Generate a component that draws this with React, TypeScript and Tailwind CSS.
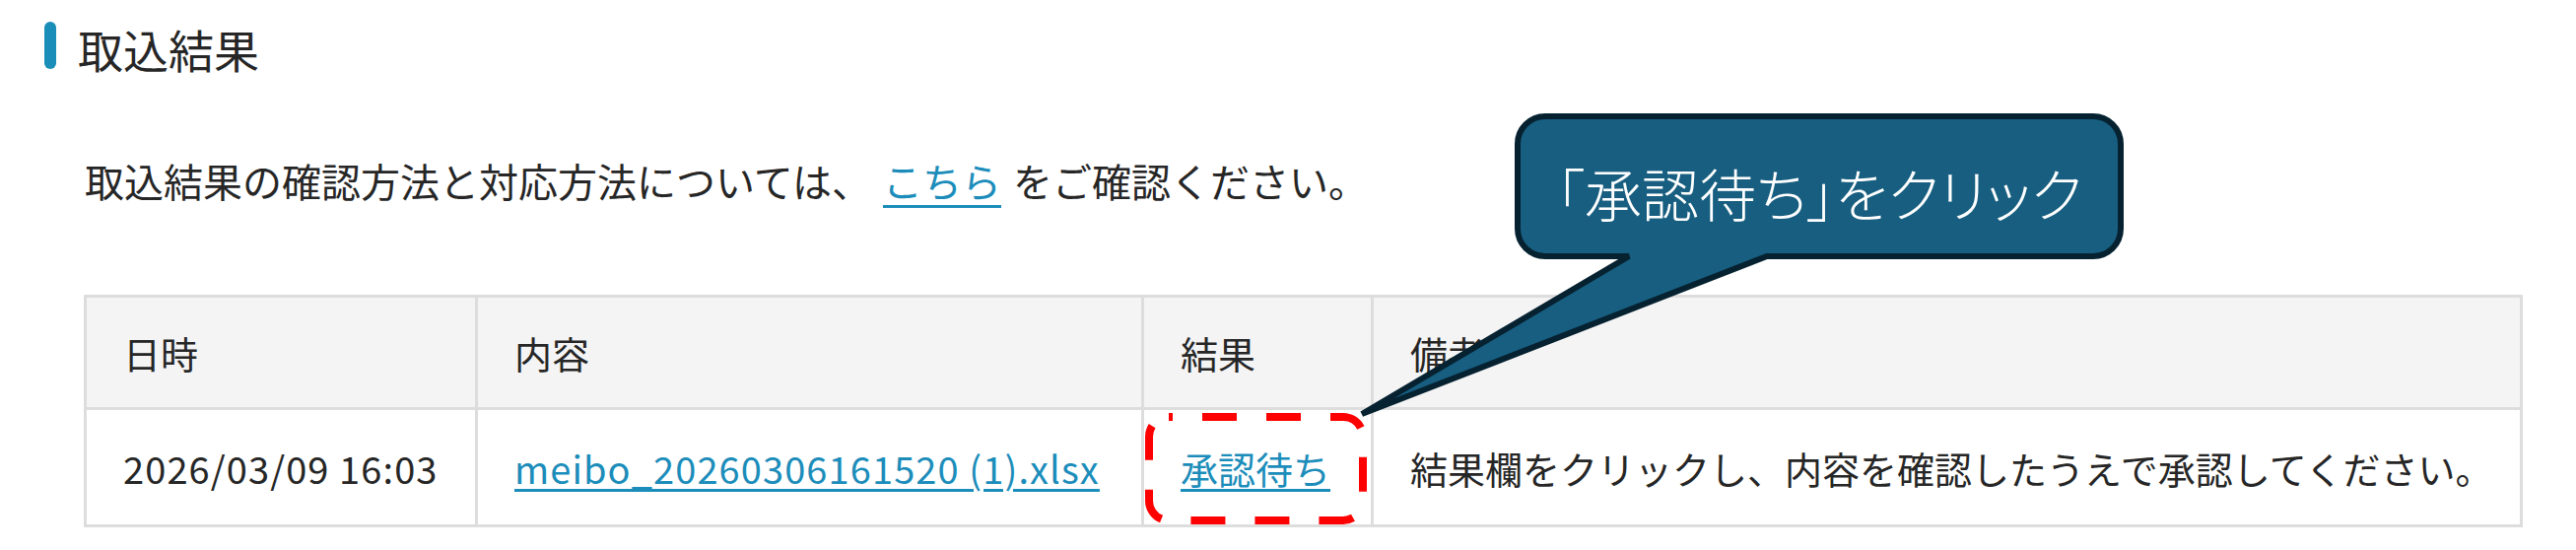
const rows = [
  {
    date: "2026/03/09 16:03",
    file: "meibo_20260306161520 (1).xlsx",
    result: "承認待ち",
    note: "結果欄をクリックし、内容を確認したうえで承認してください。",
  },
];

const App = () => {
  return (
    <div className="relative w-[2614px] h-[558px] overflow-hidden bg-white font-['Noto_Sans_CJK_JP',sans-serif] text-[#262626]">
      <div className="pl-[45px] pt-[20px]">
        {/* 見出し */}
        <div className="flex items-center gap-[22px]">
          <span className="block w-[12px] h-[48px] rounded-full bg-[#1a8db8]" />
          <h2 className="mt-[6px] text-[46px] leading-none">取込結果</h2>
        </div>

        <div className="pl-[35px]">
          <p className="mt-[81px] pl-[6px] text-[40px] leading-[60px]">
            取込結果の確認方法と対応方法については、
            <a className="mx-[12px] text-[#1c8dba] underline decoration-[3px] underline-offset-[8px]">
              こちら
            </a>
            をご確認ください。
          </p>

          {/* 取込結果テーブル */}
          <div className="ml-[5px] mt-[86px] grid w-[2475px] grid-cols-[397px_676px_233px_1166px] border-l-[3px] border-t-[3px] border-[#dddddd] text-[38px]">
            {["日時", "内容", "結果", "備考"].map((h) => (
              <div
                key={h}
                className="flex h-[114px] items-center border-r-[3px] border-b-[3px] border-[#dddddd] bg-[#f4f4f4] pl-[37px]"
              >
                {h}
              </div>
            ))}
            {rows.map((r) => (
              <div key={r.file} className="contents">
                <div className="flex h-[119px] items-center border-r-[3px] border-b-[3px] border-[#dddddd] pl-[37px] tracking-[1.1px]">
                  {r.date}
                </div>
                <div className="flex h-[119px] items-center border-r-[3px] border-b-[3px] border-[#dddddd] pl-[37px]">
                  <a className="tracking-[1.1px] text-[#1c8dba] underline decoration-[3px] underline-offset-[5px]">
                    {r.file}
                  </a>
                </div>
                <div className="flex h-[119px] items-center border-r-[3px] border-b-[3px] border-[#dddddd] pl-[37px]">
                  <a className="text-[#1c8dba] underline decoration-[3px] underline-offset-[5px]">
                    {r.result}
                  </a>
                </div>
                <div className="flex h-[119px] items-center whitespace-nowrap border-r-[3px] border-b-[3px] border-[#dddddd] pl-[37px]">
                  {r.note}
                </div>
              </div>
            ))}
          </div>
        </div>
      </div>

      {/* 吹き出し・赤枠の注記 */}
      <svg
        className="pointer-events-none absolute left-0 top-0"
        width="2614"
        height="558"
        viewBox="0 0 2614 558"
      >
        <rect
          x="1166"
          y="423"
          width="217"
          height="105"
          rx="20"
          fill="none"
          stroke="#ff0000"
          strokeWidth="8"
          strokeDasharray="35 30"
          strokeDashoffset="31"
        />
        <path
          d="M1568 118 H2124 A28 28 0 0 1 2152 146 V232 A28 28 0 0 1 2124 260 H1793 L1382 420 L1653 260 H1568 A28 28 0 0 1 1540 232 V146 A28 28 0 0 1 1568 118 Z"
          fill="#175e80"
          stroke="#062231"
          strokeWidth="6"
          strokeLinejoin="miter"
          strokeMiterlimit="3"
        />
      </svg>
      <div className="absolute left-[1537px] top-[121px] flex h-[148px] w-[618px] items-center justify-center">
        <span className="text-[58px] font-light leading-none text-white [font-feature-settings:'palt']">
          「承認待ち」をクリック
        </span>
      </div>
    </div>
  );
};

export default App;
